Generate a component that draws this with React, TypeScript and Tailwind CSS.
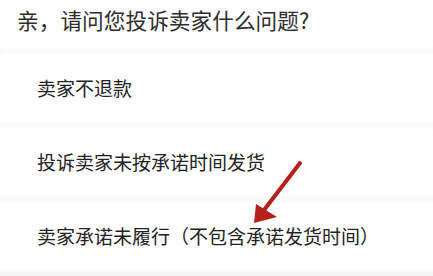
const options = [
  "卖家不退款",
  "投诉卖家未按承诺时间发货",
  "卖家承诺未履行（不包含承诺发货时间）",
];

export default function App() {
  return (
    <div className="relative w-[433px] h-[276px] overflow-hidden bg-[#f2f2f2] font-['Noto_Sans_CJK_SC','Noto_Sans',sans-serif] text-[#222]">
      {/* Header question */}
      <div className="h-[46px] bg-white pl-[17px] pt-[7px] text-[21.7px] leading-[26px] text-[#2e2e2e] shadow-[0_3px_6px_2px_#fff]">
        亲，请问您投诉卖家什么问题?
      </div>

      {/* Options */}
      <div className="flex flex-col gap-[8px] pt-[9px]">
        {options.map((label) => (
          <div
            key={label}
            className="h-[66px] bg-white flex items-center pl-[37px] text-[19px] shadow-[0_0_6px_3px_#fff]"
          >
            {label}
          </div>
        ))}
      </div>

      {/* Red annotation arrow */}
      <svg
        className="absolute left-0 top-0 pointer-events-none"
        width="433"
        height="276"
        viewBox="0 0 433 276"
      >
        <line x1="300" y1="163" x2="261" y2="214" stroke="#b5201b" strokeWidth="4" strokeLinecap="round" />
        <polygon points="254,223 256,204 277,217" fill="#b5201b" />
      </svg>
    </div>
  );
}
